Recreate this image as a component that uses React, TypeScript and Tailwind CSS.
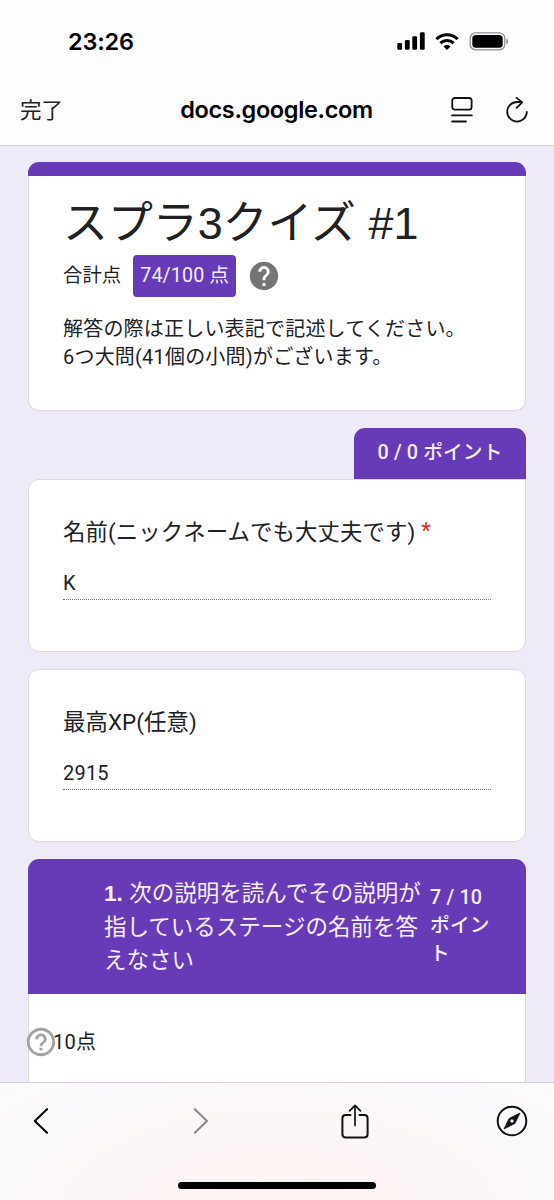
import React from 'react';
import { MdHelp, MdHelpOutline } from 'react-icons/md';

interface AnswerCardProps {
  title: string;
  answer: string;
  isRequired?: boolean;
  className?: string;
}

const StatusBar: React.FC = () => (
  <div className="flex h-[82px] items-center justify-between pl-[68px] pr-[45px]">
    <span className="mt-[2px] font-['Inter','Liberation_Sans',sans-serif] text-[23.5px] font-semibold leading-none tracking-[-0.2px]">23:26</span>
    <div className="flex items-center">
      <svg width="28" height="18" viewBox="0 0 28 18" fill="#000">
        <rect x="0.3" y="11.1" width="4.8" height="6.7" rx="1.3" />
        <rect x="7.9" y="8" width="4.8" height="9.8" rx="1.3" />
        <rect x="15.3" y="4.2" width="4.8" height="13.6" rx="1.3" />
        <rect x="22.9" y="0.3" width="4.8" height="17.5" rx="1.3" />
      </svg>
      <svg className="ml-[10px]" width="24" height="17" viewBox="0 0 24 17" fill="none" stroke="#000">
        <path d="M1.4 6.1A15.2 15.2 0 0 1 22.6 6.1" strokeWidth="3.1" />
        <path d="M5.4 10.1A9.6 9.6 0 0 1 18.6 10.1" strokeWidth="3" />
        <path d="M12 17L8.5 13.5Q12 10.6 15.5 13.5Z" fill="#000" stroke="none" />
      </svg>
      <svg className="ml-[10px]" width="40" height="19" viewBox="0 0 40 19">
        <rect x="1.2" y="0.9" width="34.6" height="17" rx="5.4" fill="none" stroke="#8e8e92" strokeWidth="1.3" />
        <rect x="3.3" y="3" width="30.4" height="12.8" rx="3.6" fill="#000" />
        <path d="M37.4 6.5Q39.2 7.3 39.2 9.4T37.4 12.3Z" fill="#8e8e92" />
      </svg>
    </div>
  </div>
);

const AddressBar: React.FC = () => (
  <div className="relative flex h-[63px] items-center justify-between pb-[7px] pl-[20px] pr-[26px]">
    <span className="mt-[2px] text-[21.5px] font-normal leading-none text-[#222]">完了</span>
    <span className="absolute inset-x-0 pr-px text-center font-['Inter','Liberation_Sans',sans-serif] text-[23.5px] font-semibold leading-none tracking-[-0.35px]">
      docs.google.com
    </span>
    <div className="flex items-center">
      <svg width="22" height="26" viewBox="0 0 22 26" fill="none" stroke="#111" strokeWidth="1.8" strokeLinecap="round">
        <rect x="1.2" y="1" width="19.4" height="11.6" rx="2.6" />
        <path d="M1.1 18.4H20.8M1.1 24.5H15" />
      </svg>
      <svg className="ml-[33px]" width="22" height="26" viewBox="0 0 22 26" fill="none" stroke="#111" strokeWidth="1.8" strokeLinecap="round" strokeLinejoin="round">
        <path d="M20.8 14.8A9.8 9.8 0 1 1 11 5H15.8" />
        <path d="M10.6 0.9L16.2 5.4L10.6 10.9" />
      </svg>
    </div>
  </div>
);

const AnswerCard: React.FC<AnswerCardProps> = ({ title, answer, isRequired, className = '' }) => (
  <div className={`h-[173px] border border-[#dadae2] bg-white px-[34px] pt-[35px] ${className}`}>
    <div className="whitespace-nowrap text-[22.4px] leading-[34px] tracking-[0.1px] text-[#202124]">
      {title}
      {isRequired && <span className="ml-[6px] inline-block -translate-y-[2px] text-[#d93025]">*</span>}
    </div>
    <div className="mt-[18px] h-[33px] border-b border-dotted border-[#777] text-[20px] leading-[33px] tracking-[0.2px] text-[#202124]">
      {answer}
    </div>
  </div>
);

const FormHeader: React.FC = () => (
  <div className="h-[249px]">
    <div className="h-[14px] rounded-t-[11px] bg-[#673ab7]" />
    <div className="h-[235px] rounded-b-[11px] border border-t-0 border-[#dadae2] bg-white pl-[34px] pt-[18px]">
      <h1 className="whitespace-nowrap font-['Liberation_Sans','Noto_Sans_CJK_JP',sans-serif] text-[44.9px] leading-[60px] text-[#202124]">
        スプラ3クイズ #1
      </h1>
      <div className="mt-px flex h-[42px] items-center">
        <span className="text-[19.4px] leading-none text-[#202124]">合計点</span>
        <span className="ml-[12px] flex h-[42px] w-[103px] items-center justify-center whitespace-nowrap rounded-[4px] bg-[#673ab7] pb-px text-[19.7px] tracking-[0.1px] text-[#f7edff]">
          74/100 点
        </span>
        <MdHelp size={34} className="ml-[11px] text-[#757575]" />
      </div>
      <p className="mt-[18px] whitespace-nowrap text-[20px] leading-[28px] tracking-[0.2px] text-[#202124]">
        解答の際は正しい表記で記述してください。
        <br />
        6つ大問(41個の小問)がございます。
      </p>
    </div>
  </div>
);

const SectionCard: React.FC = () => (
  <div className="mt-[17px]">
    <div className="flex h-[135px] rounded-t-[11px] bg-[#673ab7] pl-[76px] text-[#f8efff]">
      <div className="w-[326px] whitespace-nowrap pt-[18px] text-[22.5px] leading-[33.5px]">
        <b className="mr-px font-['Liberation_Sans',sans-serif] font-bold">1.</b> 次の説明を読んでその説明が
        <br />
        指しているステージの名前を答
        <br />
        えなさい
      </div>
      <div className="whitespace-nowrap pt-[25px] text-[19.7px] font-medium leading-[28px] tracking-[0.2px]">
        7 / 10
        <br />
        ポイン
        <br />
        ト
      </div>
    </div>
    <div className="h-[120px] border-x border-[#dadae2] bg-white pt-[31px]">
      <div className="-ml-[5px] flex h-[34px] items-center">
        <MdHelpOutline size={34} className="text-[#a3a3a3]" />
        <span className="-ml-[5px] text-[20px] leading-none tracking-[0.3px] text-[#202124]">10点</span>
      </div>
    </div>
  </div>
);

const BottomBar: React.FC = () => (
  <footer className="flex h-[118px] shrink-0 flex-col items-center border-t border-[#d3d2d6] bg-[radial-gradient(ellipse_at_50%_110%,#fff3f1_0%,#fcf6f6_45%,#fafafd_100%)]">
    <div className="flex h-[76px] w-full items-center pl-[33px]">
      <svg width="16" height="26" viewBox="0 0 16 26" fill="none" stroke="#000" strokeWidth="2.1" strokeLinecap="round" strokeLinejoin="round">
        <path d="M14 1.2L1.8 13L14 24.8" />
      </svg>
      <svg className="ml-[144px]" width="16" height="26" viewBox="0 0 16 26" fill="none" stroke="#8a888b" strokeWidth="2" strokeLinecap="round" strokeLinejoin="round">
        <path d="M1.8 1.2L14 13L1.8 24.8" />
      </svg>
      <svg className="ml-[132px]" width="28" height="35" viewBox="0 0 28 35" fill="none" stroke="#111" strokeWidth="2" strokeLinecap="round" strokeLinejoin="round">
        <path d="M9.5 11H4.8Q1.4 11 1.4 14.4V30.2Q1.4 33.6 4.8 33.6H23.2Q26.6 33.6 26.6 30.2V14.4Q26.6 11 23.2 11H18.5" />
        <path d="M14 21.5V1.5M8.6 6.8L14 1.4L19.4 6.8" strokeWidth="1.7" />
      </svg>
      <svg className="ml-[127px]" width="32" height="32" viewBox="0 0 32 32" fill="none">
        <circle cx="16" cy="16" r="14.3" stroke="#111" strokeWidth="2" />
        <path fillRule="evenodd" d="M24 8L18.9 18.5L8 24L13.1 13.5ZM16 13.9A2.1 2.1 0 1 0 16 18.1A2.1 2.1 0 1 0 16 13.9Z" fill="#111" stroke="#111" strokeWidth="0.8" strokeLinejoin="round" />
      </svg>
    </div>
    <div className="mt-[23px] h-[7px] w-[198px] rounded-full bg-black" />
  </footer>
);

const App: React.FC = () => (
  <div className="flex h-[1200px] w-[554px] flex-col overflow-hidden bg-[#eeeaf8] font-['Roboto','Noto_Sans_CJK_JP',sans-serif]">
    <header className="h-[146px] shrink-0 border-b border-[#d0ced8] bg-[#fdfcfe] text-black">
      <StatusBar />
      <AddressBar />
    </header>
    <main className="min-h-0 flex-1 overflow-hidden px-[28px] pt-[16px]">
      <FormHeader />
      <div className="ml-auto mt-[17px] flex h-[51px] w-[172px] items-center justify-center whitespace-nowrap rounded-t-[11px] bg-[#673ab7] pb-[2px] text-[19.7px] font-medium tracking-[0.15px] text-[#f8efff]">
        0 / 0 ポイント
      </div>
      <AnswerCard title="名前(ニックネームでも大丈夫です)" answer="K" isRequired className="rounded-b-[11px] rounded-tl-[11px]" />
      <AnswerCard title="最高XP(任意)" answer="2915" className="mt-[17px] rounded-[11px]" />
      <SectionCard />
    </main>
    <BottomBar />
  </div>
);

export default App;
